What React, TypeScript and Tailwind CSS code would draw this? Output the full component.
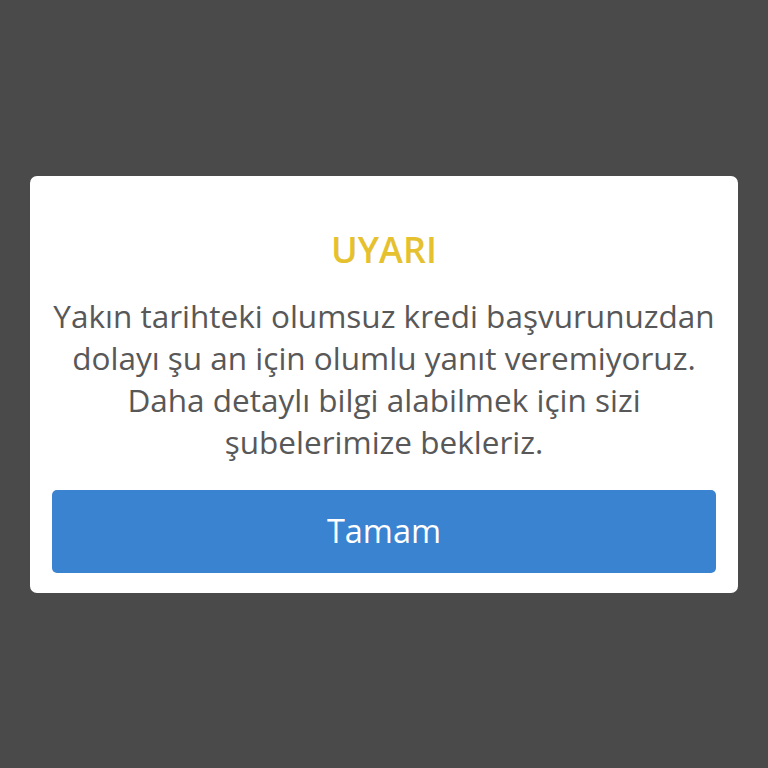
import React from "react";

const App: React.FC = () => {
  return (
    <div
      className="w-[768px] h-[768px] bg-[#4a4a4a] flex items-center justify-center"
      style={{ fontFamily: '"Open Sans", "Noto Sans", sans-serif' }}
    >
      {/* Alert card */}
      <div className="w-[708px] h-[417px] bg-white rounded-[7px] px-[22px] pt-[52px] pb-[20px] flex flex-col items-center">
        <h2 className="text-[36px] leading-[44px] font-semibold text-[#e6c12f]">UYARI</h2>
        <p className="mt-[23px] text-[31.5px] leading-[42px] text-[#585858] text-center whitespace-nowrap">
          Yakın tarihteki olumsuz kredi başvurunuzdan
          <br />
          dolayı şu an için olumlu yanıt veremiyoruz.
          <br />
          Daha detaylı bilgi alabilmek için sizi
          <br />
          şubelerimize bekleriz.
        </p>
        <button className="mt-[27px] w-full h-[83px] shrink-0 rounded-[5px] bg-[#3a83d0] text-white text-[32.5px]">
          Tamam
        </button>
      </div>
    </div>
  );
};

export default App;
